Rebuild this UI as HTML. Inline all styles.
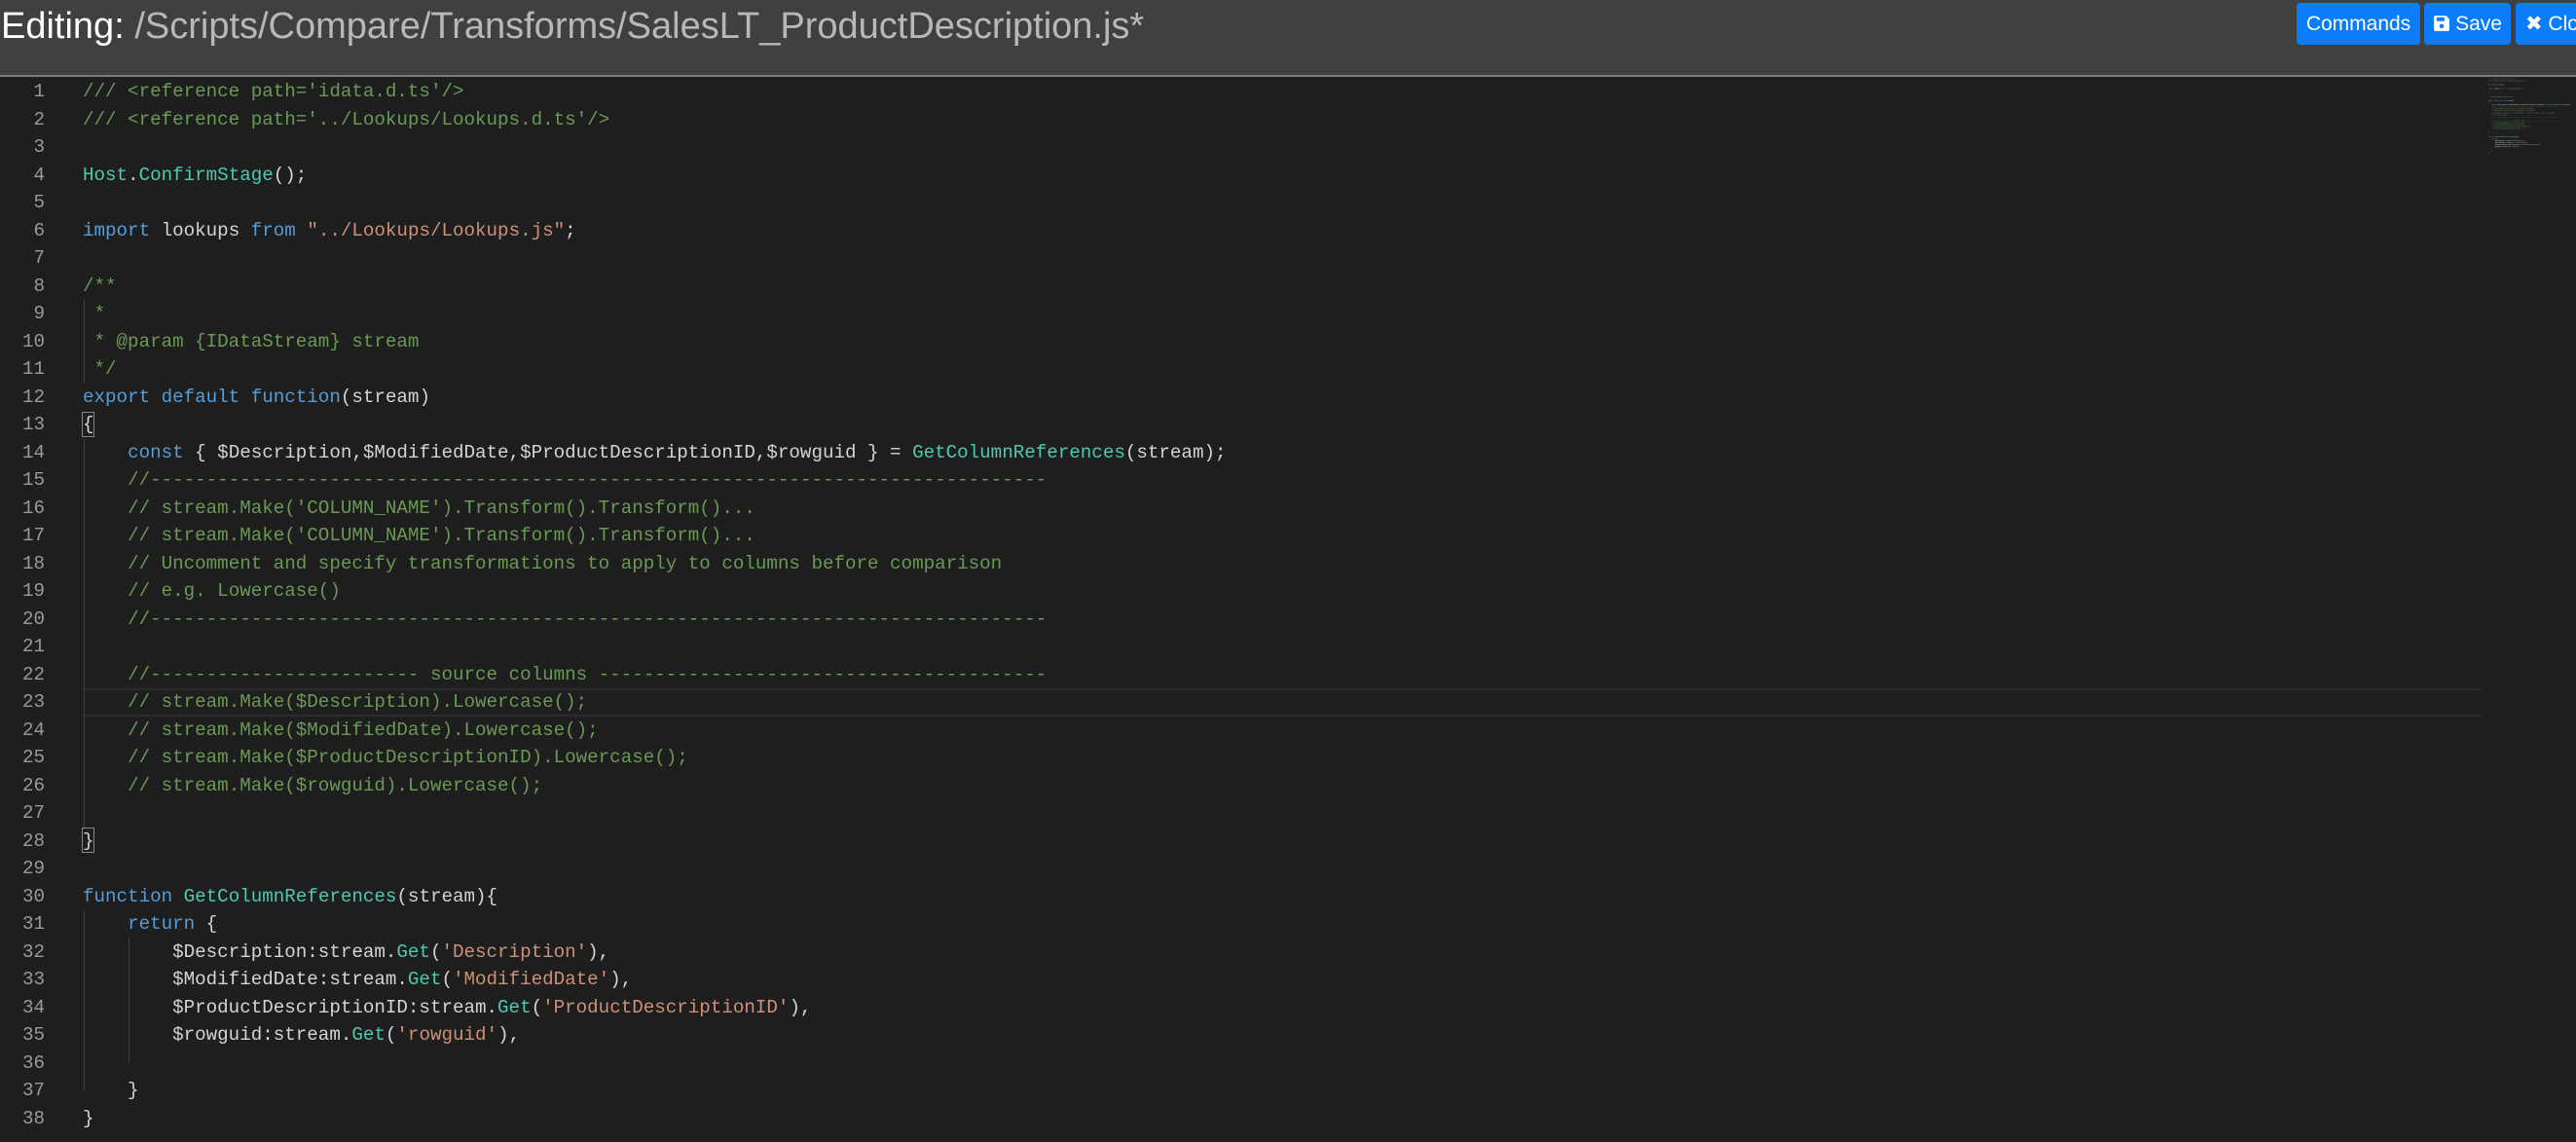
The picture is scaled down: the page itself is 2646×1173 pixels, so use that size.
<!DOCTYPE html>
<html><head><meta charset="utf-8"><style>
html,body{margin:0;padding:0;width:2646px;height:1173px;overflow:hidden;background:#1e1e1e;}
#hdr{position:absolute;left:0;top:0;width:2646px;height:77px;background:#404040;border-bottom:2px solid #7a7a7a;}
#title{position:absolute;left:1px;top:1px;font:38px/52px "Liberation Sans",sans-serif;color:#fff;white-space:nowrap;}
#title span{color:#b8b8b8;}
.btn{position:absolute;top:3px;height:43px;background:#0b7dfa;border-radius:4px;color:#fff;font:21px/43px "Liberation Sans",sans-serif;text-align:center;}
pre{margin:0;font-family:"Liberation Mono",monospace;font-size:19.2px;line-height:28.5px;white-space:pre;}
#code{position:absolute;left:85px;top:80px;color:#d4d4d4;}
#nums{position:absolute;left:0;width:46px;top:80px;text-align:right;color:#9a9a9a;}
.c{color:#6a9955}.k{color:#569cd6}.t{color:#4ec9b0}.s{color:#ce9178}
.g{position:absolute;width:1px;background:#404040;}
#hl{position:absolute;left:85px;top:707px;width:2463px;height:25px;border-top:2px solid #2c2c2c;border-bottom:2px solid #2c2c2c;}
.bm{position:absolute;width:11px;height:24px;border:1px solid #888;}
#mini{position:absolute;left:2556px;top:80px;transform:scale(0.072);transform-origin:0 0;color:#d4d4d4;}
#mini pre{font-size:19.2px;}
</style></head><body>
<div id="hdr">
<div id="title">Editing: <span>/Scripts/Compare/Transforms/SalesLT_ProductDescription.js*</span></div>
<div class="btn" style="left:2359px;width:127px;">Commands</div>
<div class="btn" style="left:2490px;width:89px;"><svg width="18" height="18" viewBox="0 0 16 16" style="vertical-align:-2px;margin-right:5px"><path d="M1 2a1 1 0 0 1 1-1h10l3 3v10a1 1 0 0 1-1 1H2a1 1 0 0 1-1-1z" fill="#fff"/><rect x="3.5" y="2.5" width="7" height="3.5" fill="#0b7dfa"/><circle cx="8" cy="10.5" r="2" fill="#0b7dfa"/></svg>Save</div>
<div class="btn" style="left:2584px;width:90px;text-align:left;padding-left:10px;box-sizing:border-box;">✖ Close</div>
</div>
<div id="hl"></div>
<div class="g" style="left:86px;top:308px;height:86px"></div>
<div class="g" style="left:86px;top:451px;height:400px"></div>
<div class="g" style="left:86px;top:935px;height:186px"></div>
<div class="g" style="left:132px;top:963px;height:129px"></div>
<div class="bm" style="left:84px;top:423px"></div>
<div class="bm" style="left:84px;top:850px"></div>
<pre id="nums">1
2
3
4
5
6
7
8
9
10
11
12
13
14
15
16
17
18
19
20
21
22
23
24
25
26
27
28
29
30
31
32
33
34
35
36
37
38</pre>
<pre id="code"><span class="c">/// &lt;reference path='idata.d.ts'/&gt;</span>
<span class="c">/// &lt;reference path='../Lookups/Lookups.d.ts'/&gt;</span>

<span class="t">Host</span>.<span class="t">ConfirmStage</span>();

<span class="k">import</span> lookups <span class="k">from</span> <span class="s">"../Lookups/Lookups.js"</span>;

<span class="c">/**</span>
<span class="c"> *</span>
<span class="c"> * @param {IDataStream} stream</span>
<span class="c"> */</span>
<span class="k">export default function</span>(stream)
{
    <span class="k">const</span> { $Description,$ModifiedDate,$ProductDescriptionID,$rowguid } = <span class="t">GetColumnReferences</span>(stream);
    <span class="c">//--------------------------------------------------------------------------------</span>
    <span class="c">// stream.Make('COLUMN_NAME').Transform().Transform()...</span>
    <span class="c">// stream.Make('COLUMN_NAME').Transform().Transform()...</span>
    <span class="c">// Uncomment and specify transformations to apply to columns before comparison</span>
    <span class="c">// e.g. Lowercase()</span>
    <span class="c">//--------------------------------------------------------------------------------</span>

    <span class="c">//------------------------ source columns ----------------------------------------</span>
    <span class="c">// stream.Make($Description).Lowercase();</span>
    <span class="c">// stream.Make($ModifiedDate).Lowercase();</span>
    <span class="c">// stream.Make($ProductDescriptionID).Lowercase();</span>
    <span class="c">// stream.Make($rowguid).Lowercase();</span>

}

<span class="k">function</span> <span class="t">GetColumnReferences</span>(stream){
    <span class="k">return</span> {
        $Description:stream.<span class="t">Get</span>(<span class="s">'Description'</span>),
        $ModifiedDate:stream.<span class="t">Get</span>(<span class="s">'ModifiedDate'</span>),
        $ProductDescriptionID:stream.<span class="t">Get</span>(<span class="s">'ProductDescriptionID'</span>),
        $rowguid:stream.<span class="t">Get</span>(<span class="s">'rowguid'</span>),

    }
}</pre>
<div id="mini"><pre><span class="c">/// &lt;reference path='idata.d.ts'/&gt;</span>
<span class="c">/// &lt;reference path='../Lookups/Lookups.d.ts'/&gt;</span>

<span class="t">Host</span>.<span class="t">ConfirmStage</span>();

<span class="k">import</span> lookups <span class="k">from</span> <span class="s">"../Lookups/Lookups.js"</span>;

<span class="c">/**</span>
<span class="c"> *</span>
<span class="c"> * @param {IDataStream} stream</span>
<span class="c"> */</span>
<span class="k">export default function</span>(stream)
{
    <span class="k">const</span> { $Description,$ModifiedDate,$ProductDescriptionID,$rowguid } = <span class="t">GetColumnReferences</span>(stream);
    <span class="c">//--------------------------------------------------------------------------------</span>
    <span class="c">// stream.Make('COLUMN_NAME').Transform().Transform()...</span>
    <span class="c">// stream.Make('COLUMN_NAME').Transform().Transform()...</span>
    <span class="c">// Uncomment and specify transformations to apply to columns before comparison</span>
    <span class="c">// e.g. Lowercase()</span>
    <span class="c">//--------------------------------------------------------------------------------</span>

    <span class="c">//------------------------ source columns ----------------------------------------</span>
    <span class="c">// stream.Make($Description).Lowercase();</span>
    <span class="c">// stream.Make($ModifiedDate).Lowercase();</span>
    <span class="c">// stream.Make($ProductDescriptionID).Lowercase();</span>
    <span class="c">// stream.Make($rowguid).Lowercase();</span>

}

<span class="k">function</span> <span class="t">GetColumnReferences</span>(stream){
    <span class="k">return</span> {
        $Description:stream.<span class="t">Get</span>(<span class="s">'Description'</span>),
        $ModifiedDate:stream.<span class="t">Get</span>(<span class="s">'ModifiedDate'</span>),
        $ProductDescriptionID:stream.<span class="t">Get</span>(<span class="s">'ProductDescriptionID'</span>),
        $rowguid:stream.<span class="t">Get</span>(<span class="s">'rowguid'</span>),

    }
}</pre></div>
</body></html>
